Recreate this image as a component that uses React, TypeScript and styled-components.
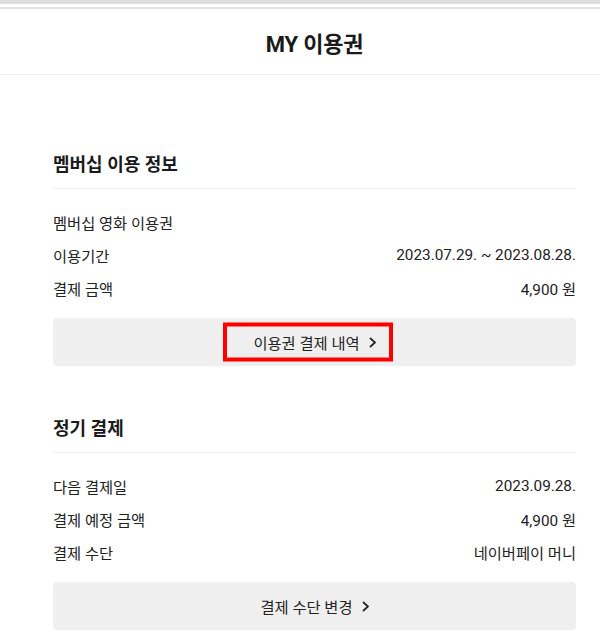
import React from 'react'
import styled, { createGlobalStyle } from 'styled-components'

const GlobalStyle = createGlobalStyle`
  html, body {
    margin: 0px;
    padding: 0px;
    background: #FFFFFF;
  }

  body {
    font-family: Roboto, "Noto Sans CJK KR", "Noto Sans", sans-serif;
    color: #222222;
  }
`

const Page = styled.div`
  border-top: 4px solid #DEDEDE;
`

const Header = styled.header`
  margin-top: 3px;
  border-top: 2px solid #E2E2E2;
  border-bottom: 1px solid #EFEFEF;
  height: 65px;
  display: flex;
  align-items: center;
  justify-content: center;
  padding: 0px 24px 0px 53px;
`

const HeaderTitle = styled.h1`
  margin: 0px;
  font-size: 22px;
  font-weight: 700;
  color: #1A1A1A;
  letter-spacing: -0.2px;
`

const Content = styled.main`
  padding: 78px 24px 0px 53px;
  display: flex;
  flex-direction: column;
  gap: 51px;
`

const Section = styled.section`
  display: flex;
  flex-direction: column;
`

const SectionTitle = styled.h2`
  margin: 0px;
  font-size: 18px;
  font-weight: 700;
  line-height: 24px;
  color: #1A1A1A;
  padding-bottom: 11px;
  border-bottom: 1px solid #F0F0F0;
`

const Rows = styled.dl`
  margin: 16px 0px 0px;
  display: flex;
  flex-direction: column;
`

const Row = styled.div`
  display: flex;
  justify-content: space-between;
  align-items: center;
  height: 33px;
  font-size: 15.3px;
`

const Label = styled.dt`
  margin: 0px;
`

const Value = styled.dd`
  margin: 0px;
`

const ActionButton = styled.button`
  margin-top: 14px;
  height: 48px;
  width: 100%;
  border: none;
  border-radius: 4px;
  background: #EFEFEF;
  display: flex;
  align-items: center;
  justify-content: center;
  font-family: inherit;
  font-size: 15.3px;
  color: #222222;
  cursor: pointer;
`

const ButtonLabel = styled.span<{ $marked?: boolean }>`
  position: relative;
  display: flex;
  align-items: center;
  gap: 9px;

  &::after {
    content: '';
    display: ${p => (p.$marked ? 'block' : 'none')};
    position: absolute;
    left: -30px;
    right: -17px;
    top: 50%;
    height: 39px;
    transform: translateY(-50%);
    border: 4px solid #FF0000;
    box-sizing: border-box;
  }
`

const Chevron = () => (
  <svg width="7" height="11" viewBox="0 0 7 11" fill="none">
    <path d="M1 1 L6 5.5 L1 10" stroke="#222222" strokeWidth="1.7" />
  </svg>
)

interface InfoRow {
  label: string;
  value?: string;
}

interface InfoSectionProps {
  title: string;
  rows: InfoRow[];
  action: string;
  marked?: boolean;
}

const InfoSection = ({ title, rows, action, marked }: InfoSectionProps): React.ReactElement => (
  <Section>
    <SectionTitle>{title}</SectionTitle>
    <Rows>
      {rows.map(row => (
        <Row key={row.label}>
          <Label>{row.label}</Label>
          {row.value && <Value>{row.value}</Value>}
        </Row>
      ))}
    </Rows>
    <ActionButton>
      <ButtonLabel $marked={marked}>
        {action}
        <Chevron />
      </ButtonLabel>
    </ActionButton>
  </Section>
)

const App = (): React.ReactElement => (
  <Page>
    <GlobalStyle />
    <Header>
      <HeaderTitle>MY 이용권</HeaderTitle>
    </Header>
    <Content>
      <InfoSection
        title="멤버십 이용 정보"
        rows={[
          { label: '멤버십 영화 이용권' },
          { label: '이용기간', value: '2023.07.29. ~ 2023.08.28.' },
          { label: '결제 금액', value: '4,900 원' },
        ]}
        action="이용권 결제 내역"
        marked
      />
      <InfoSection
        title="정기 결제"
        rows={[
          { label: '다음 결제일', value: '2023.09.28.' },
          { label: '결제 예정 금액', value: '4,900 원' },
          { label: '결제 수단', value: '네이버페이 머니' },
        ]}
        action="결제 수단 변경"
      />
    </Content>
  </Page>
)

export default App
